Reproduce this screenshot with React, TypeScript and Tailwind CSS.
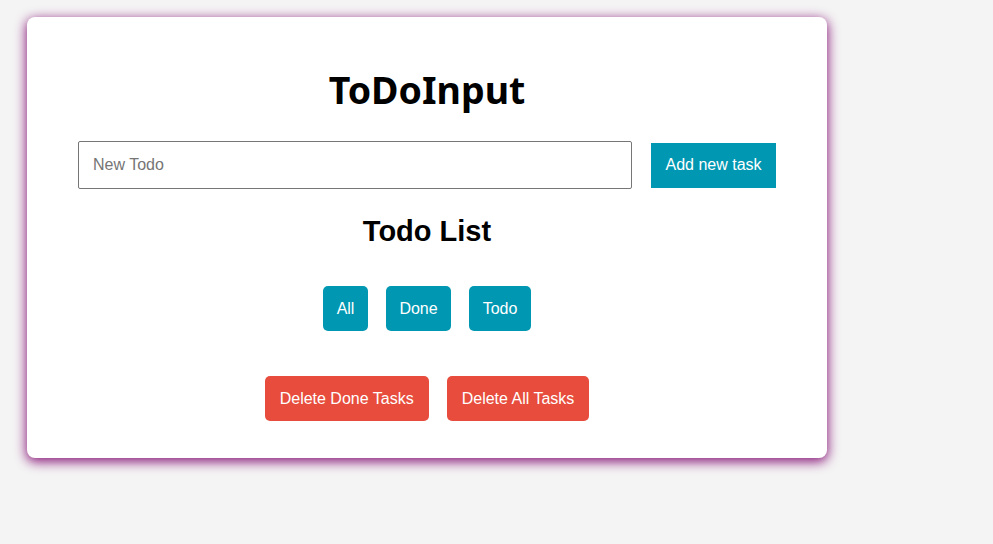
import React from "react";

export default function App() {
  const teal = "bg-[#0097b2]";
  return (
    <div className="min-h-[544px] w-full bg-[#f4f4f4] pt-[17px] pl-[27px]" style={{ fontFamily: "'Liberation Sans', Arial, sans-serif" }}>
      <div className="w-[800px] h-[441px] bg-white rounded-[8px] shadow-[0_3px_12px_1px_rgb(140,30,125)] flex flex-col items-center pt-[49px]">
        <h1 className="text-[37.5px] leading-[48px] font-bold text-black" style={{ fontFamily: "'Noto Sans', 'Open Sans', sans-serif" }}>
          ToDoInput
        </h1>
        <div className="w-full px-[51px] mt-[27px] flex items-center gap-[19px]">
          <input
            className="flex-1 h-[48px] border border-[#767676] rounded-[2px] px-[14px] text-[16px] text-black placeholder:text-[#757575] outline-none"
            placeholder="New Todo"
          />
          <button className={`${teal} w-[125px] h-[45px] text-white text-[16px]`}>Add new task</button>
        </div>
        <h2 className="mt-[25px] text-[29px] leading-[34px] font-bold text-black">Todo List</h2>
        <div className="mt-[38px] flex gap-[18px]">
          <button className={`${teal} h-[45px] px-[13.5px] rounded-[5px] text-white text-[16px]`}>All</button>
          <button className={`${teal} h-[45px] px-[13.5px] rounded-[5px] text-white text-[16px]`}>Done</button>
          <button className={`${teal} h-[45px] px-[13.5px] rounded-[5px] text-white text-[16px]`}>Todo</button>
        </div>
        <div className="mt-[45px] flex gap-[18px]">
          <button className="bg-[#e74c3c] h-[45px] px-[15px] rounded-[5px] text-white text-[16px]">Delete Done Tasks</button>
          <button className="bg-[#e74c3c] h-[45px] px-[15px] rounded-[5px] text-white text-[16px]">Delete All Tasks</button>
        </div>
      </div>
    </div>
  );
}
